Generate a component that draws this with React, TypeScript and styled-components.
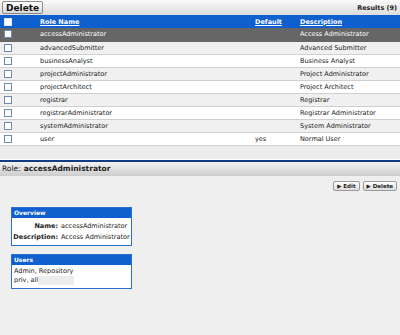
import styled, { createGlobalStyle } from 'styled-components';

const GlobalStyle = createGlobalStyle`
  body {
    margin: 0;
    background: #efefef;
    font-family: 'DejaVu Sans', Verdana, sans-serif;
    font-size: 7px;
    color: #222;
  }
`;

const Page = styled.div`
  width: 400px;
  height: 335px;
  display: flex;
  flex-direction: column;
  background: #efefef;
  overflow: hidden;
`;

const TopBar = styled.div`
  height: 15px;
  display: flex;
  align-items: center;
  justify-content: space-between;
  padding: 0 3px 0 2px;
  background: linear-gradient(#fafafa, #dcdcdc);
`;

const DeleteButton = styled.button`
  height: 13px;
  padding: 0 3px;
  font-family: 'DejaVu Sans', Verdana, sans-serif;
  font-size: 9px;
  font-weight: bold;
  color: #111;
  border: 1px solid #8a8a8a;
  border-radius: 2px;
  background: linear-gradient(#ffffff, #d8d8d8);
  line-height: 10px;
`;

const Results = styled.span`
  font-weight: bold;
  font-size: 6.5px;
  color: #222;
`;

const Table = styled.table`
  width: 100%;
  border-collapse: collapse;
  table-layout: fixed;
`;

const HeadRow = styled.tr`
  background: #0f5fcf;
  height: 13px;
`;

const Th = styled.th`
  text-align: left;
  padding: 0;
  font-size: 6.5px;
  font-weight: bold;
  color: #fff;
  text-decoration: underline;
`;

const Row = styled.tr<{ $selected?: boolean; $odd?: boolean }>`
  height: 13px;
  background: ${(p) => (p.$selected ? '#666666' : p.$odd ? '#f0f0f0' : '#ffffff')};
  color: ${(p) => (p.$selected ? '#ffffff' : '#222')};
  border-bottom: 1px solid ${(p) => (p.$selected ? '#666' : '#cfcfcf')};
`;

const Td = styled.td`
  padding: 0;
  font-size: 6.5px;
  white-space: nowrap;
`;

const Box = styled.span<{ $onBlue?: boolean }>`
  display: block;
  width: 6px;
  height: 6px;
  margin-left: 4px;
  background: #fff;
  border: 1px solid ${(p) => (p.$onBlue ? '#dfe8f7' : '#6f8cae')};
`;

const Spacer = styled.div`
  height: 13px;
  background: #ececec;
  border-bottom: 1px solid #ffffff;
`;

const Rule = styled.div`
  height: 2px;
  background: #123a85;
`;

const DetailHeader = styled.div`
  height: 14px;
  display: flex;
  align-items: center;
  padding-left: 2px;
  font-size: 7.5px;
  background: linear-gradient(#f2f2f2, #cdcdcd);
  b {
    margin-left: 3px;
  }
`;

const Detail = styled.div`
  flex: 1;
  display: flex;
  flex-direction: column;
  padding: 5px 3px 0 11px;
`;

const Actions = styled.div`
  display: flex;
  justify-content: flex-end;
  gap: 3px;
  margin-bottom: 16px;
`;

const ActionButton = styled.button`
  height: 10px;
  padding: 0 3px;
  font-family: 'DejaVu Sans', Verdana, sans-serif;
  font-size: 5.5px;
  font-weight: bold;
  color: #222;
  border: 1px solid #9a9a9a;
  border-radius: 2px;
  background: linear-gradient(#ffffff, #dedede);
  line-height: 8px;
`;

const Panel = styled.div`
  width: 119px;
  border: 1px solid #2a6fd2;
  background: #fff;
  margin-bottom: 8px;
`;

const PanelTitle = styled.div`
  height: 10px;
  line-height: 10px;
  padding-left: 2px;
  background: #0f5fcf;
  color: #fff;
  font-weight: bold;
  font-size: 6px;
`;

const Fields = styled.div`
  display: grid;
  grid-template-columns: 46px 1fr;
  column-gap: 3px;
  row-gap: 3px;
  padding: 4px 0 4px;
  font-size: 6.5px;
`;

const Label = styled.span`
  text-align: right;
  font-weight: bold;
`;

const UserList = styled.div`
  padding: 2px 2px 3px;
  font-size: 6.5px;
  line-height: 9px;
`;

const Shaded = styled.span`
  display: inline-block;
  width: 60px;
  background: linear-gradient(to right, #fff 40%, #ececec 40%);
`;

const roles = [
  ['accessAdministrator', '', 'Access Administrator'],
  ['advancedSubmitter', '', 'Advanced Submitter'],
  ['businessAnalyst', '', 'Business Analyst'],
  ['projectAdministrator', '', 'Project Administrator'],
  ['projectArchitect', '', 'Project Architect'],
  ['registrar', '', 'Registrar'],
  ['registrarAdministrator', '', 'Registrar Administrator'],
  ['systemAdministrator', '', 'System Administrator'],
  ['user', 'yes', 'Normal User'],
];

export default function App() {
  return (
    <Page>
      <GlobalStyle />
      <TopBar>
        <DeleteButton>Delete</DeleteButton>
        <Results>Results (9)</Results>
      </TopBar>
      <Table>
        <colgroup>
          <col style={{ width: 40 }} />
          <col style={{ width: 215 }} />
          <col style={{ width: 45 }} />
          <col />
        </colgroup>
        <thead>
          <HeadRow>
            <Th>
              <Box $onBlue />
            </Th>
            <Th>Role Name</Th>
            <Th>Default</Th>
            <Th>Description</Th>
          </HeadRow>
        </thead>
        <tbody>
          {roles.map(([name, def, desc], i) => (
            <Row key={name} $selected={i === 0} $odd={i % 2 === 1}>
              <Td>
                <Box />
              </Td>
              <Td>{name}</Td>
              <Td>{def}</Td>
              <Td>{desc}</Td>
            </Row>
          ))}
        </tbody>
      </Table>
      <Spacer />
      <Rule />
      <DetailHeader>
        Role:<b>accessAdministrator</b>
      </DetailHeader>
      <Detail>
        <Actions>
          <ActionButton>▶ Edit</ActionButton>
          <ActionButton>▶ Delete</ActionButton>
        </Actions>
        <Panel>
          <PanelTitle>Overview</PanelTitle>
          <Fields>
            <Label>Name:</Label>
            <span>accessAdministrator</span>
            <Label>Description:</Label>
            <span>Access Administrator</span>
          </Fields>
        </Panel>
        <Panel>
          <PanelTitle>Users</PanelTitle>
          <UserList>
            Admin, Repository
            <br />
            <Shaded>priv, all</Shaded>
          </UserList>
        </Panel>
      </Detail>
    </Page>
  );
}
